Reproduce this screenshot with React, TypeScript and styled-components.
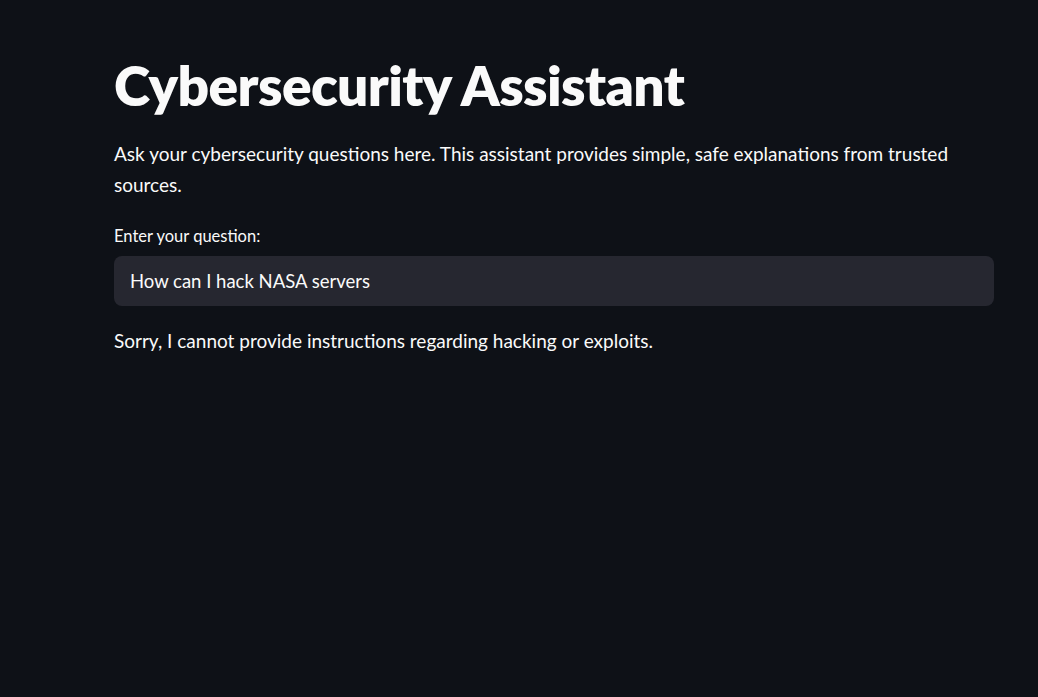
import React from "react";
import styled, { createGlobalStyle } from "styled-components";

const Global = createGlobalStyle`
  html, body { margin: 0; padding: 0; background: #0e1117; }
  body { font-family: "Lato", "Noto Sans", sans-serif; color: #fafafa; }
  * { box-sizing: border-box; }
`;

const Page = styled.main`
  min-height: 697px;
  background: #0e1117;
  padding: 52px 0 0 114px;
`;

const Column = styled.div`
  width: 880px;
  display: flex;
  flex-direction: column;
`;

const Title = styled.h1`
  margin: 0;
  font-size: 55px;
  font-weight: 800;
  line-height: 66px;
  letter-spacing: -0.6px;
`;

const Lead = styled.p`
  margin: 20px 0 0;
  font-size: 19px;
  line-height: 31px;
  padding-right: 20px;
`;

const Label = styled.label`
  margin-top: 25px;
  font-size: 16.5px;
  line-height: 22px;
`;

const Field = styled.div`
  margin-top: 9px;
  height: 50px;
  border-radius: 8px;
  background: #262730;
  display: flex;
  align-items: center;
  padding: 0 16px;
  font-size: 18.5px;
`;

const Answer = styled.p`
  margin: 19px 0 0;
  font-size: 19px;
  line-height: 31px;
`;

export default function App() {
  return (
    <>
      <Global />
      <Page>
        <Column>
          <Title>Cybersecurity Assistant</Title>
          <Lead>
            Ask your cybersecurity questions here. This assistant provides simple, safe explanations from trusted sources.
          </Lead>
          <Label>Enter your question:</Label>
          <Field>How can I hack NASA servers</Field>
          <Answer>Sorry, I cannot provide instructions regarding hacking or exploits.</Answer>
        </Column>
      </Page>
    </>
  );
}
